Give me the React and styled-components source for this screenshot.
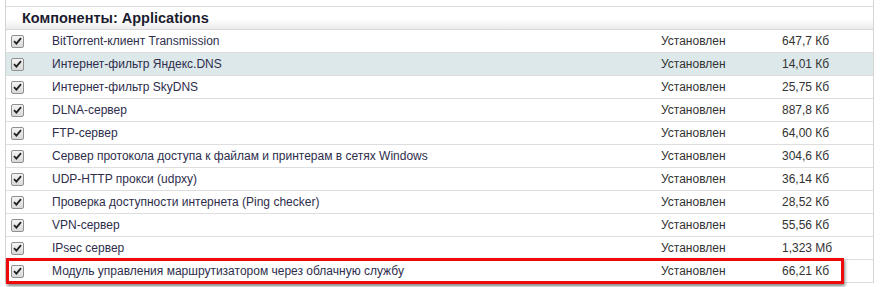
import React from 'react';
import styled, { createGlobalStyle } from 'styled-components';

const Global = createGlobalStyle`
    html, body {
        margin: 0;
        padding: 0;
        background: #fff;
        font-family: "Liberation Sans", Arial, sans-serif;
    }
`;

const Page = styled.div`
    width: 880px;
    height: 287px;
    overflow: hidden;
    background: #fff;
`;

const Table = styled.div`
    margin-left: 5px;
    width: 867px;
    border-left: 1px solid #d4d4d4;
    border-right: 1px solid #d4d4d4;
    margin-top: -16px;
`;

const Filler = styled.div`
    height: 22px;
    border-bottom: 1px solid #dcdcdc;
`;

const Header = styled.div`
    height: 22px;
    display: flex;
    align-items: center;
    padding-left: 16px;
    font-size: 14.5px;
    font-weight: bold;
    color: #1c1c30;
    background: linear-gradient(#fff 0%, #fff 55%, #ececec 100%);
    border-bottom: 1px solid #d8d8d8;
`;

const Row = styled.div`
    position: relative;
    height: 22px;
    display: grid;
    grid-template-columns: 46px 609px 121px 1fr;
    align-items: center;
    font-size: 12px;
    color: #333;
    background: ${({ $hover }) => ($hover ? '#dce8ea' : '#fff')};
    border-bottom: 1px solid #dedede;
`;

const CheckCell = styled.div`
    display: flex;
    padding-left: 5px;
`;

const Box = styled.span`
    width: 11px;
    height: 11px;
    border: 1px solid #8f8f8f;
    border-radius: 2px;
    background: linear-gradient(#f4f4f4, #d9d9d9);
    display: flex;
    align-items: center;
    justify-content: center;
`;

const Name = styled.div`
    color: #2e2d4c;
    white-space: nowrap;
`;

const Status = styled.div`
    color: #333;
`;

const Size = styled.div`
    color: #333;
`;

const Marker = styled.div`
    position: absolute;
    left: 0px;
    right: 29px;
    top: -2px;
    bottom: -2px;
    border: 3px solid #ee0a0a;
    box-shadow: 1px 2px 3px rgba(0, 0, 0, 0.5);
    pointer-events: none;
`;

const Check = () => (
    <Box>
        <svg width="9" height="8" viewBox="0 0 9 8">
            <path d="M1 4.2 L3.4 6.6 L8 1.2" fill="none" stroke="#222" strokeWidth="1.8" />
        </svg>
    </Box>
);

const items = [
    ['BitTorrent-клиент Transmission', '647,7 Кб'],
    ['Интернет-фильтр Яндекс.DNS', '14,01 Кб', true],
    ['Интернет-фильтр SkyDNS', '25,75 Кб'],
    ['DLNA-сервер', '887,8 Кб'],
    ['FTP-сервер', '64,00 Кб'],
    ['Сервер протокола доступа к файлам и принтерам в сетях Windows', '304,6 Кб'],
    ['UDP-HTTP прокси (udpxy)', '36,14 Кб'],
    ['Проверка доступности интернета (Ping checker)', '28,52 Кб'],
    ['VPN-сервер', '55,56 Кб'],
    ['IPsec сервер', '1,323 Мб'],
    ['Модуль управления маршрутизатором через облачную службу', '66,21 Кб', false, true],
];

export default function App() {
    return (
        <Page>
            <Global />
            <Table>
                <Filler />
                <Header>Компоненты: Applications</Header>
                {items.map(([name, size, hover, marked]) => (
                    <Row key={name} $hover={hover}>
                        <CheckCell><Check /></CheckCell>
                        <Name>{name}</Name>
                        <Status>Установлен</Status>
                        <Size>{size}</Size>
                        {marked && <Marker />}
                    </Row>
                ))}
            </Table>
        </Page>
    );
}
